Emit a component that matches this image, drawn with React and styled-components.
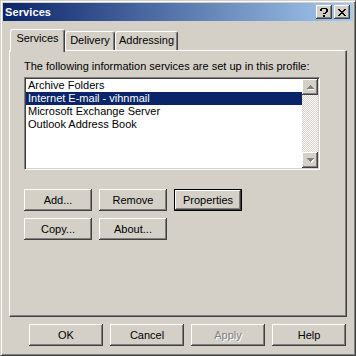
import React from "react";
import styled, { createGlobalStyle, css } from "styled-components";

const Global = createGlobalStyle`
  html, body { margin: 0; padding: 0; background: #d4d0c8; }
  * { box-sizing: border-box; }
  body { font-family: "Liberation Sans", Arial, sans-serif; font-size: 11px; color: #000; }
`;

const raised = css`
  box-shadow: inset -1px -1px #404040, inset 1px 1px #ffffff, inset -2px -2px #808080, inset 2px 2px #d4d0c8;
`;

const Window = styled.div`
  width: 356px;
  height: 356px;
  background: #d4d0c8;
  border: 1px solid;
  border-color: #d4d0c8 #404040 #404040 #d4d0c8;
  box-shadow: inset 1px 1px #ffffff, inset -1px -1px #808080;
  padding: 2px;
  display: flex;
  flex-direction: column;
`;

const TitleBar = styled.div`
  height: 18px;
  flex: none;
  display: flex;
  align-items: center;
  padding: 0 3px 0 2px;
  background: linear-gradient(to right, #0a246a, #a6caf0);
  color: #fff;
  font-weight: bold;
  font-size: 11px;
`;

const Title = styled.div`
  flex: 1;
  letter-spacing: 0.1px;
`;

const CaptionButtons = styled.div`
  display: flex;
  gap: 2px;
`;

const CaptionButton = styled.div`
  width: 16px;
  height: 14px;
  background: #d4d0c8;
  ${raised};
  display: flex;
  align-items: center;
  justify-content: center;
  color: #000;
`;

const Body = styled.div`
  flex: 1;
  display: flex;
  flex-direction: column;
  padding: 8px 6px 7px 6px;
`;

const TabRow = styled.div`
  height: 21px;
  display: flex;
  align-items: flex-end;
  padding-left: 1px;
  position: relative;
  z-index: 1;
`;

const Tab = styled.div`
  width: ${(p) => p.$w}px;
  height: ${(p) => (p.$active ? 23 : 19)}px;
  margin-bottom: ${(p) => (p.$active ? -2 : 0)}px;
  background: #d4d0c8;
  border-left: 1px solid #ffffff;
  border-top: 1px solid #ffffff;
  border-right: 1px solid #404040;
  border-radius: 3px 3px 0 0;
  box-shadow: inset -1px 0 #808080;
  display: flex;
  justify-content: center;
  padding-top: ${(p) => (p.$active ? 2 : 2)}px;
  line-height: 13px;
`;

const Panel = styled.div`
  flex: 1;
  border: 1px solid;
  border-color: #ffffff #404040 #404040 #ffffff;
  box-shadow: inset -1px -1px #808080;
  padding: 9px 0 0 14px;
  display: flex;
  flex-direction: column;
`;

const Label = styled.div`
  line-height: 13px;
  height: 13px;
  margin-bottom: 4px;
  white-space: nowrap;
`;

const ListBox = styled.div`
  width: 296px;
  height: 93px;
  background: #fff;
  border: 1px solid;
  border-color: #808080 #ffffff #ffffff #808080;
  box-shadow: inset 1px 1px #404040, inset -1px -1px #d4d0c8;
  padding: 1px;
  display: flex;
`;

const Items = styled.div`
  flex: 1;
  display: flex;
  flex-direction: column;
  padding-top: 0;
`;

const Item = styled.div`
  height: 13px;
  line-height: 13px;
  padding-left: 2px;
  white-space: nowrap;
  ${(p) => p.$selected && css`background: #0a246a; color: #fff;`}
`;

const ScrollBar = styled.div`
  width: 16px;
  display: flex;
  flex-direction: column;
  justify-content: space-between;
  background: repeating-conic-gradient(#ffffff 0 25%, #d4d0c8 0 50%) 0 0 / 2px 2px;
`;

const ScrollButton = styled.div`
  width: 16px;
  height: 16px;
  background: #d4d0c8;
  ${raised};
  display: flex;
  align-items: center;
  justify-content: center;
`;

const ButtonGrid = styled.div`
  margin-top: 19px;
  display: grid;
  grid-template-columns: repeat(3, 68px);
  grid-auto-rows: 22px;
  column-gap: 7px;
  row-gap: 7px;
`;

const Button = styled.div`
  width: ${(p) => p.$w || 68}px;
  height: 22px;
  background: #d4d0c8;
  ${raised};
  display: flex;
  align-items: center;
  justify-content: center;
  line-height: 13px;
  ${(p) => p.$default && css`
    border: 1px solid #000;
    box-shadow: inset -1px -1px #404040, inset 1px 1px #ffffff, inset -2px -2px #808080;
  `}
  ${(p) => p.$disabled && css`
    color: #808080;
    text-shadow: 1px 1px 0 #ffffff;
  `}
`;

const BottomRow = styled.div`
  margin-top: 7px;
  display: flex;
  justify-content: flex-end;
  gap: 7px;
  padding-right: 1px;
`;

const Arrow = ({ up }) => (
  <svg width="7" height="5" viewBox="0 0 7 5" shapeRendering="crispEdges">
    {up ? (
      <>
        <path d="M1 4h7v1H1z M2 3h5v1H2z M3 2h3v1H3z M4 1h1v1H4z" fill="#ffffff" />
        <path d="M0 3h7v1H0z M1 2h5v1H1z M2 1h3v1H2z M3 0h1v1H3z" fill="#808080" />
      </>
    ) : (
      <>
        <path d="M1 1h7v1H1z M2 2h5v1H2z M3 3h3v1H3z M4 4h1v1H4z" fill="#ffffff" />
        <path d="M0 0h7v1H0z M1 1h5v1H1z M2 2h3v1H2z M3 3h1v1H3z" fill="#808080" />
      </>
    )}
  </svg>
);

const HelpGlyph = () => (
  <svg width="8" height="9" viewBox="0 0 8 9" shapeRendering="crispEdges">
    <path d="M1 0h6v1H1z M0 1h2v2H0z M6 1h2v3H6z M5 4h2v1H5z M3 5h3v1H3z M3 7h2v2H3z" fill="#000" />
  </svg>
);

const CloseGlyph = () => (
  <svg width="8" height="7" viewBox="0 0 8 7" shapeRendering="crispEdges">
    <path d="M0 0h2v1H0z M6 0h2v1H6z M1 1h2v1H1z M5 1h2v1H5z M2 2h4v1H2z M3 3h2v1H3z M2 4h4v1H2z M1 5h2v1H1z M5 5h2v1H5z M0 6h2v1H0z M6 6h2v1H6z" fill="#000" />
  </svg>
);

export default function App() {
  const items = [
    "Archive Folders",
    "Internet E-mail - vihnmail",
    "Microsoft Exchange Server",
    "Outlook Address Book",
  ];
  return (
    <>
      <Global />
      <Window>
        <TitleBar>
          <Title>Services</Title>
          <CaptionButtons>
            <CaptionButton><HelpGlyph /></CaptionButton>
            <CaptionButton><CloseGlyph /></CaptionButton>
          </CaptionButtons>
        </TitleBar>
        <Body>
          <TabRow>
            <Tab $w={55} $active>Services</Tab>
            <Tab $w={50}>Delivery</Tab>
            <Tab $w={63}>Addressing</Tab>
          </TabRow>
          <Panel>
            <Label>The following information services are set up in this profile:</Label>
            <ListBox>
              <Items>
                {items.map((t, i) => (
                  <Item key={t} $selected={i === 1}>{t}</Item>
                ))}
              </Items>
              <ScrollBar>
                <ScrollButton><Arrow up /></ScrollButton>
                <ScrollButton><Arrow /></ScrollButton>
              </ScrollBar>
            </ListBox>
            <ButtonGrid>
              <Button>Add...</Button>
              <Button>Remove</Button>
              <Button $default>Properties</Button>
              <Button>Copy...</Button>
              <Button>About...</Button>
            </ButtonGrid>
          </Panel>
          <BottomRow>
            <Button $w={74}>OK</Button>
            <Button $w={74}>Cancel</Button>
            <Button $w={74} $disabled>Apply</Button>
            <Button $w={74}>Help</Button>
          </BottomRow>
        </Body>
      </Window>
    </>
  );
}
